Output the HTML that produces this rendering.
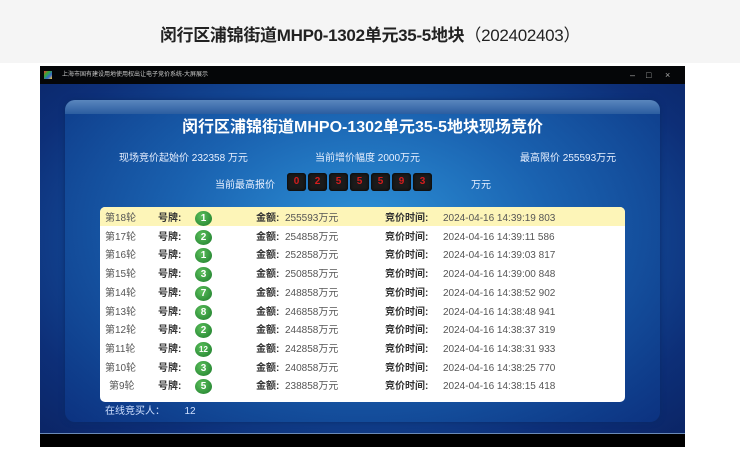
<!DOCTYPE html>
<html><head><meta charset="utf-8"><style>
*{margin:0;padding:0;box-sizing:border-box}
body{width:740px;height:455px;background:#fff;font-family:"Liberation Sans","Noto Sans CJK SC",sans-serif;position:relative;overflow:hidden}
.top{position:absolute;left:0;top:0;width:740px;height:63px;background:#f5f5f5}
.top h1{position:absolute;top:21px;left:0;width:740px;text-align:center;font-size:17px;font-weight:bold;color:#222;letter-spacing:-0.3px}
.top h1 span{font-weight:normal}
.shot{position:absolute;left:40px;top:66px;width:645px;height:381px;background:#000}
.tb{position:absolute;left:0;top:0;width:645px;height:18px;background:#050608;color:#ccc;font-size:6px;line-height:18px;padding-left:22px}
.tb i{position:absolute;left:4px;top:5px;width:8px;height:8px;background:linear-gradient(135deg,#e33,#3a3,#36c,#fc3)}
.tb b{position:absolute;top:0;font-weight:normal;color:#aaa;font-size:9px}
.blue{position:absolute;left:0;top:18px;width:645px;height:350px;background:radial-gradient(ellipse at 50% 45%,#2a8ad0 0%,#1656a6 45%,#0d2f78 80%,#0b2566 100%);border-bottom:1px solid #6a8ab8}
.panel{position:absolute;left:25px;top:16px;width:595px;height:322px;border-radius:10px;background:radial-gradient(ellipse at 50% 40%,#2d92d8 0%,#1a62b0 45%,#0f3e8c 85%,#0c3280 100%);box-shadow:0 0 6px #0a2a66}
.panel:before{content:"";position:absolute;left:0;top:0;right:0;height:14px;border-radius:10px 10px 0 0;background:linear-gradient(#5a86bd,#2b5da0)}
.t2{position:absolute;left:0;width:595px;top:13px;text-align:center;color:#fff;font-size:16px;font-weight:bold}
.info{position:absolute;color:#e8f0ff;font-size:10px}
.dig{position:absolute;top:73px;width:19px;height:18px;background:#1b1b1b;border-radius:3px;color:#d51d1d;font-size:10px;font-weight:bold;text-align:center;line-height:18px;box-shadow:inset 0 0 3px #000}
.tbl{position:absolute;left:35px;top:107px;width:525px;height:195px;background:#fff;border-radius:5px}
.row{position:absolute;left:0;width:525px;height:18.7px;font-size:10px;color:#555;line-height:18.7px}
.row.h{background:#fdf5b8;border-radius:5px 5px 0 0}
.row span{position:absolute;top:3px}
.row .k{font-weight:bold;color:#333}
.c{position:absolute;left:95px;top:4px;width:17px;height:15px;border-radius:50%;background:radial-gradient(circle at 40% 35%,#5cc05c,#1b7a2a);color:#fff;font-size:10px;font-weight:bold;text-align:center;line-height:15px}
.on{position:absolute;left:40px;top:302px;color:#cfe0ff;font-size:10px}
</style></head><body>
<div class="top"><h1>闵行区浦锦街道MHP0-1302单元35-5地块<span>（202402403）</span></h1></div>
<div class="shot">
<div class="tb"><i></i>上海市国有建设用地使用权出让电子竞价系统-大屏展示<b style="left:590px">–</b><b style="left:606px">□</b><b style="left:625px">×</b></div>
<div class="blue">
<div class="panel">
<div class="t2">闵行区浦锦街道MHPO-1302单元35-5地块现场竞价</div>
<div class="info" style="left:54px;top:49px">现场竞价起始价 232358 万元</div>
<div class="info" style="left:250px;top:49px">当前增价幅度 2000万元</div>
<div class="info" style="left:455px;top:49px">最高限价 255593万元</div>
<div class="info" style="left:150px;top:76px">当前最高报价</div>
<div class="dig" style="left:222px">0</div><div class="dig" style="left:243px">2</div><div class="dig" style="left:264px">5</div><div class="dig" style="left:285px">5</div><div class="dig" style="left:306px">5</div><div class="dig" style="left:327px">9</div><div class="dig" style="left:348px">3</div>
<div class="info" style="left:406px;top:76px">万元</div>
<div class="tbl">
<div class="row h" style="top:0"><span style="left:5px">第18轮</span><span class="k" style="left:58px">号牌:</span><div class="c">1</div><span class="k" style="left:156px">金额:</span><span style="left:185px">255593万元</span><span class="k" style="left:285px">竞价时间:</span><span style="left:343px">2024-04-16 14:39:19 803</span></div>
<div class="row" style="top:18.7px"><span style="left:5px">第17轮</span><span class="k" style="left:58px">号牌:</span><div class="c">2</div><span class="k" style="left:156px">金额:</span><span style="left:185px">254858万元</span><span class="k" style="left:285px">竞价时间:</span><span style="left:343px">2024-04-16 14:39:11 586</span></div>
<div class="row" style="top:37.4px"><span style="left:5px">第16轮</span><span class="k" style="left:58px">号牌:</span><div class="c">1</div><span class="k" style="left:156px">金额:</span><span style="left:185px">252858万元</span><span class="k" style="left:285px">竞价时间:</span><span style="left:343px">2024-04-16 14:39:03 817</span></div>
<div class="row" style="top:56.1px"><span style="left:5px">第15轮</span><span class="k" style="left:58px">号牌:</span><div class="c">3</div><span class="k" style="left:156px">金额:</span><span style="left:185px">250858万元</span><span class="k" style="left:285px">竞价时间:</span><span style="left:343px">2024-04-16 14:39:00 848</span></div>
<div class="row" style="top:74.8px"><span style="left:5px">第14轮</span><span class="k" style="left:58px">号牌:</span><div class="c">7</div><span class="k" style="left:156px">金额:</span><span style="left:185px">248858万元</span><span class="k" style="left:285px">竞价时间:</span><span style="left:343px">2024-04-16 14:38:52 902</span></div>
<div class="row" style="top:93.5px"><span style="left:5px">第13轮</span><span class="k" style="left:58px">号牌:</span><div class="c">8</div><span class="k" style="left:156px">金额:</span><span style="left:185px">246858万元</span><span class="k" style="left:285px">竞价时间:</span><span style="left:343px">2024-04-16 14:38:48 941</span></div>
<div class="row" style="top:112.2px"><span style="left:5px">第12轮</span><span class="k" style="left:58px">号牌:</span><div class="c">2</div><span class="k" style="left:156px">金额:</span><span style="left:185px">244858万元</span><span class="k" style="left:285px">竞价时间:</span><span style="left:343px">2024-04-16 14:38:37 319</span></div>
<div class="row" style="top:130.9px"><span style="left:5px">第11轮</span><span class="k" style="left:58px">号牌:</span><div class="c" style="font-size:8px">12</div><span class="k" style="left:156px">金额:</span><span style="left:185px">242858万元</span><span class="k" style="left:285px">竞价时间:</span><span style="left:343px">2024-04-16 14:38:31 933</span></div>
<div class="row" style="top:149.6px"><span style="left:5px">第10轮</span><span class="k" style="left:58px">号牌:</span><div class="c">3</div><span class="k" style="left:156px">金额:</span><span style="left:185px">240858万元</span><span class="k" style="left:285px">竞价时间:</span><span style="left:343px">2024-04-16 14:38:25 770</span></div>
<div class="row" style="top:168.3px"><span style="left:9px">第9轮</span><span class="k" style="left:58px">号牌:</span><div class="c">5</div><span class="k" style="left:156px">金额:</span><span style="left:185px">238858万元</span><span class="k" style="left:285px">竞价时间:</span><span style="left:343px">2024-04-16 14:38:15 418</span></div>
</div>
<div class="on">在线竞买人：&nbsp;&nbsp;&nbsp;&nbsp;&nbsp;&nbsp;&nbsp;12</div>
</div>
</div>
</div>
</body></html>
